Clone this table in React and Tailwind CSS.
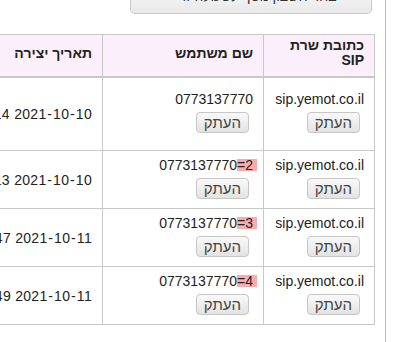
import React from "react";

const rows = [
  { h: "h-[74px]", suffix: null, d: ["2021", "10", "10"], t: "10:42:14" },
  { h: "h-[58px]", suffix: "=2", d: ["2021", "10", "10"], t: "10:51:13" },
  { h: "h-[58px]", suffix: "=3", d: ["2021", "10", "11"], t: "09:33:47" },
  { h: "h-[58px]", suffix: "=4", d: ["2021", "10", "11"], t: "09:35:49" },
];

function CopyBtn() {
  return (
    <div>
      <button className="mt-[3px] mb-[5px] mr-[4px] h-[21px] px-[7px] rounded-[4px] border border-[#c6c6c6] bg-gradient-to-b from-[#f9f9f9] to-[#e3e3e3] text-[15px] leading-[19px] text-[#444] font-['Liberation_Sans',Arial,sans-serif]">
        העתק
      </button>
    </div>
  );
}

export default function App() {
  return (
    <div
      dir="rtl"
      className="w-[393px] h-[342px] overflow-hidden bg-white text-[#222] font-['Liberation_Sans',Arial,sans-serif] text-[14px] leading-[20px]"
    >
      <div className="mr-[7px] h-full border-r border-[#bbbbbb] pr-[10px]">
        <div className="flex justify-start">
          <div className="mr-[3px] -mt-[23px] h-[37px] w-[242px] rounded-[5px] border border-[#c8c8c8] bg-gradient-to-b from-[#fdfdfd] to-[#e9e9e9] flex items-center justify-center gap-[8px] text-[#333] text-[14px]">
            <span>בחר חשבון נוסף לפעולה זו</span>
            <span className="text-[11px] text-[#555]">✱</span>
          </div>
        </div>
        <table className="mt-[20px] border-collapse table-fixed w-[580px]">
          <colgroup>
            <col className="w-[111px]" />
            <col className="w-[161px]" />
            <col className="w-[160px]" />
            <col className="w-[148px]" />
          </colgroup>
          <thead>
            <tr className="bg-[#fbeffb]">
              <th className="h-[42px] border border-b-2 border-[#c8c8c8] px-[10px] pb-[4px] text-right align-middle font-bold leading-[15px]">
                כתובת שרת
                <br />
                SIP
              </th>
              <th className="border border-b-2 border-[#c8c8c8] px-[10px] pb-[4px] text-right align-middle font-bold leading-[15px]">
                שם משתמש
              </th>
              <th className="border border-b-2 border-[#c8c8c8] px-[10px] pb-[4px] text-right align-middle font-bold leading-[15px]">
                תאריך יצירה
              </th>
              <th className="border border-b-2 border-[#c8c8c8] px-[10px] pb-[4px] text-right align-middle font-bold leading-[15px]">
                פעולות
              </th>
            </tr>
          </thead>
          <tbody>
            {rows.map((r, i) => (
              <tr key={i}>
                <td className={`${r.h} border border-[#c8c8c8] px-[10px] text-right align-middle`}>
                  <div>sip.yemot.co.il</div>
                  <CopyBtn />
                </td>
                <td className="border border-[#c8c8c8] px-[10px] text-right align-middle">
                  <div>
                    <span dir="ltr">
                      0773137770
                      {r.suffix && (
                        <span className="inline-block bg-[#ffaaaa] pr-[4px] -mr-[4px] leading-[12px]">
                          {r.suffix}
                        </span>
                      )}
                    </span>
                  </div>
                  <CopyBtn />
                </td>
                <td className="border border-[#c8c8c8] px-[10px] text-right align-middle whitespace-nowrap tracking-[0.3px]">
                  <span dir="ltr">
                    {r.d[0]}
                    <span className="mx-[0.8px]">-</span>
                    {r.d[1]}
                    <span className="mx-[0.8px]">-</span>
                    {r.d[2]}
                  </span>{" "}
                  <span dir="ltr">{r.t}</span>
                </td>
                <td className="border border-[#c8c8c8] px-[10px] text-right align-middle"></td>
              </tr>
            ))}
          </tbody>
        </table>
      </div>
    </div>
  );
}
